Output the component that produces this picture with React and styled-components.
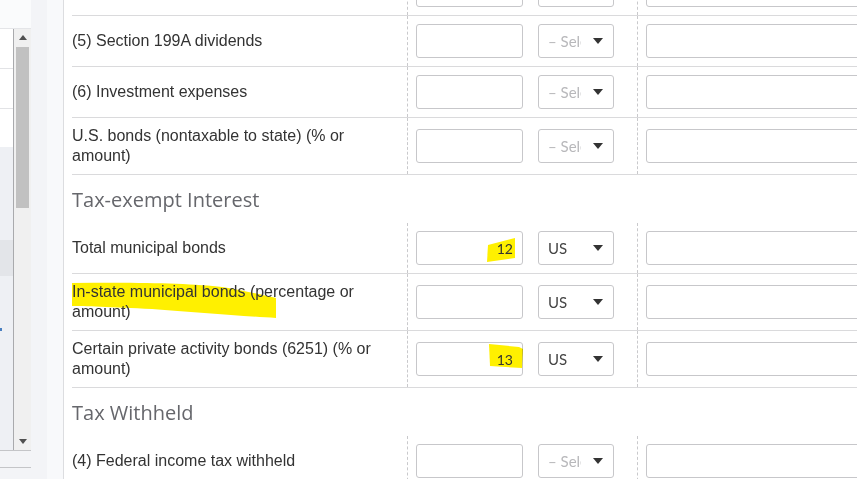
import styled, { createGlobalStyle } from 'styled-components';

const GlobalStyle = createGlobalStyle`
  html, body { margin: 0; padding: 0; background: #fff; }
  body { font-family: "Liberation Sans", Arial, sans-serif; }
  * { box-sizing: border-box; }
`

const Page = styled.div`
  display: flex;
  width: 857px;
  height: 479px;
  overflow: hidden;
  background: #fff;
`

const Sidebar = styled.div`
  flex: 0 0 64px;
  display: flex;
  border-right: 1px solid #dcdde0;
  background: #f3f4f7;
`

const NavPane = styled.div`
  width: 31px;
  display: flex;
  flex-direction: column;
`

const NavTop = styled.div`
  height: 28px;
  background: #fafbfc;
`

const NavBox = styled.div`
  height: 423px;
  display: flex;
  border-top: 1px solid #e4e5e8;
  border-bottom: 1px solid #c4c5c8;
`

const NavList = styled.div`
  width: 14px;
  display: flex;
  flex-direction: column;
  border-right: 1px solid #a9aaad;
  background: #eef0f4;
`

const NavItem = styled.div`
  height: ${p => p.h}px;
  background: ${p => p.bg || '#fff'};
  border-bottom: ${p => p.line ? '1px solid #e2e3e6' : 'none'};
  position: relative;
`

const BlueTick = styled.div`
  position: absolute;
  left: 0;
  top: 52px;
  width: 2px;
  height: 3px;
  background: #4a7fc0;
`

const Scrollbar = styled.div`
  width: 17px;
  display: flex;
  flex-direction: column;
  background: #f0f0f0;
`

const ScrollArrow = styled.div`
  height: 17px;
  display: flex;
  align-items: center;
  justify-content: center;
`

const Track = styled.div`
  flex: 1;
  padding: 1px 2px;
`

const Thumb = styled.div`
  height: 161px;
  background: #c1c1c1;
`

const NavBottom = styled.div`
  height: 17px;
  border-bottom: 1px solid #c4c5c8;
`

const Gutter = styled.div`
  width: ${p => p.w}px;
  background: ${p => p.bg};
`

const Main = styled.div`
  flex: 1;
  padding-left: 8px;
  overflow: hidden;
`

const Form = styled.div`
  margin-top: -35px;
  width: 900px;
`

const Row = styled.div`
  display: flex;
  border-bottom: 1px solid #dadadc;
`

const LabelCell = styled.div`
  width: 335px;
  flex: none;
  padding: 8px 7px 8px 0;
  display: flex;
  align-items: center;
`

const Label = styled.div`
  position: relative;
  width: 328px;
  font-size: 16px;
  line-height: 20px;
  color: #333;
`

const LabelText = styled.span`
  position: relative;
`

const Cell = styled.div`
  display: flex;
  align-items: center;
  gap: 15px;
  padding: ${p => p.w ? '8px 23px 8px 8px' : '8px 0 8px 8px'};
  border-left: 1px dashed #c9c9cc;
  width: ${p => p.w ? p.w + 'px' : 'auto'};
  flex: ${p => p.w ? '0 0 auto' : '1'};
`

const Field = styled.div`
  position: relative;
  width: ${p => p.w ? p.w + 'px' : '100%'};
  height: 34px;
  border: 1px solid #c7c7ca;
  border-radius: 3px;
  background: #fff;
  display: flex;
  align-items: center;
  justify-content: flex-end;
  padding: 0 9px;
  font-family: Lato, "Open Sans", sans-serif;
  font-size: 14px;
  color: #333;
`

const FieldValue = styled.span`
  position: relative;
  z-index: 1;
`

const Select = styled.div`
  width: 76px;
  height: 34px;
  border: 1px solid #c7c7ca;
  border-radius: 3px;
  background: #fff;
  display: flex;
  align-items: center;
  padding: 0 0 0 9px;
  font-family: Lato, "Open Sans", sans-serif;
  font-size: 15px;
`

const SelectText = styled.span`
  width: 33px;
  overflow: hidden;
  white-space: nowrap;
  color: ${p => p.placeholder ? '#b8b8bb' : '#444'};
`

const Caret = styled.svg`
  margin-left: 12px;
  flex: none;
`

const Marker = styled.svg`
  position: absolute;
  left: ${p => p.x}px;
  top: ${p => p.y}px;
  mix-blend-mode: multiply;
  pointer-events: none;
`

const Heading = styled.div`
  height: 48px;
  display: flex;
  align-items: center;
  font-family: "Open Sans", Lato, sans-serif;
  font-size: 20px;
  color: #66676c;
`

const YELLOW = '#fff000'

const rows = [
  { label: '', placeholder: true },
  { label: '(5) Section 199A dividends', placeholder: true },
  { label: '(6) Investment expenses', placeholder: true },
  { label: 'U.S. bonds (nontaxable to state) (% or amount)', placeholder: true },
  { heading: 'Tax-exempt Interest' },
  { label: 'Total municipal bonds', value: '12', mark: 'a' },
  { label: 'In-state municipal bonds (percentage or amount)', swipe: true },
  { label: 'Certain private activity bonds (6251) (% or amount)', value: '13', mark: 'b' },
  { heading: 'Tax Withheld' },
  { label: '(4) Federal income tax withheld', placeholder: true },
]

function ArrowGlyph({ down }) {
  return (
    <svg width="8" height="5" viewBox="0 0 8 5">
      <path d={down ? 'M0 0 H8 L4 5 Z' : 'M0 5 H8 L4 0 Z'} fill="#505050" />
    </svg>
  )
}

function ValueMark({ kind }) {
  if (kind === 'a') {
    return (
      <Marker x={70} y={6} width="29" height="25" viewBox="0 0 29 25">
        <path d="M1 7 L28 0 L28 20 L0 24 Z" fill={YELLOW} />
      </Marker>
    )
  }
  return (
    <Marker x={72} y={1} width="34" height="26" viewBox="0 0 34 26">
      <path d="M0 0 L30 3 L34 5 L33 24 L1 22 Z" fill={YELLOW} />
    </Marker>
  )
}

function FormRow({ row }) {
  return (
    <Row>
      <LabelCell>
        <Label>
          {row.swipe && (
            <Marker x={0} y={0} width="206" height="38" viewBox="0 0 206 38">
              <path d="M0 1 C60 0 120 1 150 5 C175 9 195 14 204 16 L204 36 C170 34 120 30 80 27 C40 25 10 24 0 24 Z" fill={YELLOW} />
            </Marker>
          )}
          <LabelText>{row.label}</LabelText>
        </Label>
      </LabelCell>
      <Cell w={230}>
        <Field w={107}>
          {row.mark && <ValueMark kind={row.mark} />}
          {row.value && <FieldValue>{row.value}</FieldValue>}
        </Field>
        <Select>
          <SelectText placeholder={row.placeholder}>{row.placeholder ? '– Select –' : 'US'}</SelectText>
          <Caret width="10" height="6" viewBox="0 0 10 6">
            <path d="M0 0 H10 L5 6 Z" fill="#333" />
          </Caret>
        </Select>
      </Cell>
      <Cell>
        <Field />
      </Cell>
    </Row>
  )
}

export default function App() {
  return (
    <>
      <GlobalStyle />
      <Page>
        <Sidebar>
          <NavPane>
            <NavTop />
            <NavBox>
              <NavList>
                <NavItem h={40} line />
                <NavItem h={40} line />
                <NavItem h={38} />
                <NavItem h={93} bg="#eef0f4" />
                <NavItem h={36} bg="#e3e5e9" />
                <NavItem h={174} bg="#eef0f4"><BlueTick /></NavItem>
              </NavList>
              <Scrollbar>
                <ScrollArrow><ArrowGlyph /></ScrollArrow>
                <Track><Thumb /></Track>
                <ScrollArrow><ArrowGlyph down /></ScrollArrow>
              </Scrollbar>
            </NavBox>
            <NavBottom />
          </NavPane>
          <Gutter w={16} bg="#f3f4f7" />
          <Gutter w={16} bg="#f8f9fb" />
        </Sidebar>
        <Main>
          <Form>
            {rows.map((row, i) =>
              row.heading
                ? <Heading key={i}>{row.heading}</Heading>
                : <FormRow key={i} row={row} />
            )}
          </Form>
        </Main>
      </Page>
    </>
  )
}
